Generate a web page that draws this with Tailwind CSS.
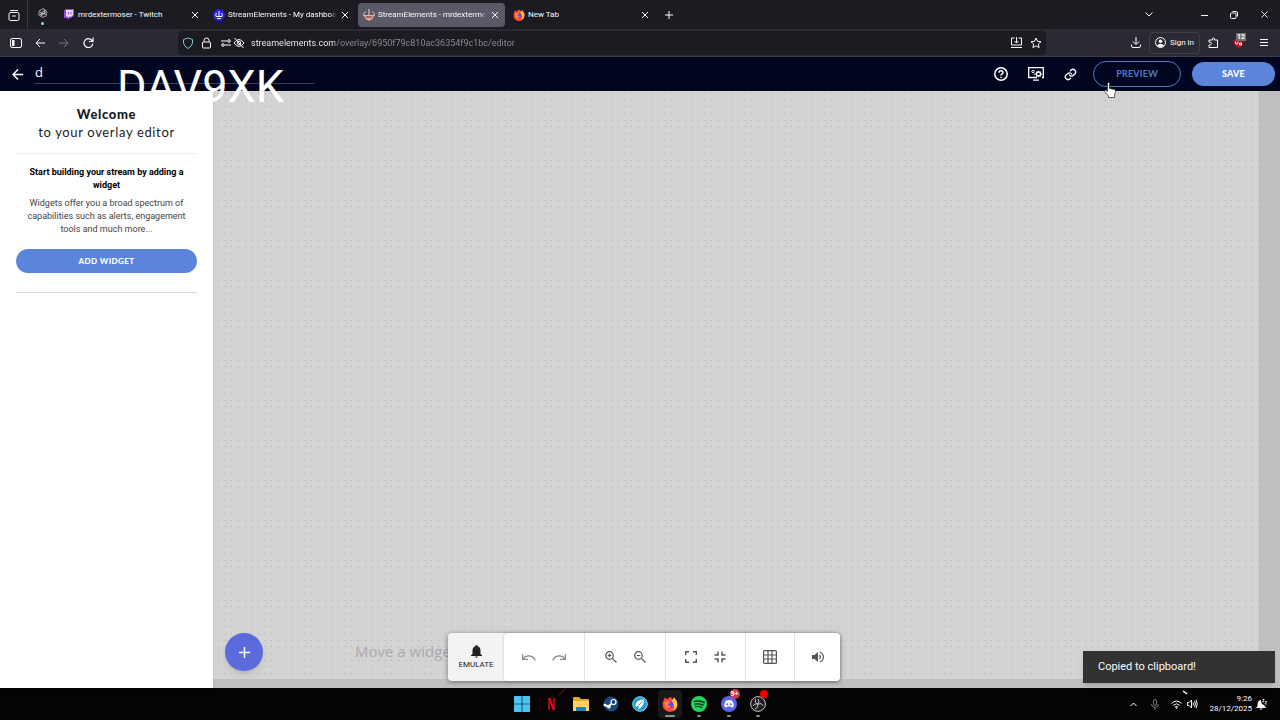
<!DOCTYPE html>
<html lang="en">
<head>
  <meta charset="UTF-8" />
  <meta name="viewport" content="width=device-width, initial-scale=1.0" />
  <title>StreamElements - Overlay editor</title>
  <script src="https://cdn.jsdelivr.net/npm/@tailwindcss/browser@4"></script>
</head>
<body class="h-screen flex flex-col overflow-hidden bg-[#bfbfbf] font-['Open_Sans',sans-serif] text-[10px] text-[#fbfbfe]">

  <!-- browser tabs -->
  <div class="h-[29px] shrink-0 flex items-center bg-[#1c1b22] font-[Roboto,sans-serif]">
    <button class="w-7 h-full flex items-center justify-center border-r border-[#3a3944]" aria-label="Firefox View">
      <svg class="size-3" viewBox="0 0 12 12" fill="none" stroke="currentColor" stroke-linecap="round"><path d="M2.500 1.500h7" /><rect x="1" y="3.500" width="10" height="8" rx="1.500" /><path d="M4.500 7h3" /></svg>
    </button>
    <button class="w-[29px] h-full flex flex-col items-center justify-center pt-1 gap-1" aria-label="Pinned tab">
      <svg class="size-[10px]" viewBox="0 0 24 24" fill="none" stroke="#c9c9cf" stroke-width="2"><path d="M12 2a5 5 0 0 1 5 3.500 5 5 0 0 1 3 8 5 5 0 0 1-5 7 5 5 0 0 1-8-1 5 5 0 0 1-4-8 5 5 0 0 1 4-7 5 5 0 0 1 5-2.500z" /><path d="M8 20v-9l8-5M16 4v9l-8 5M4 9l8 5 8-5M5 16l7-4 7 4" /></svg>
      <span class="size-[3px] rounded-full bg-[#7fe3d4]"></span>
    </button>
    <div class="flex items-center gap-[3px]">
      <div class="w-[148px] h-6 pl-[6px] pr-1 flex items-center gap-[3px]">
        <svg class="size-3 shrink-0" viewBox="0 0 12 12"><path d="M2.500 0H11v6.500L8 9H6.500L4.500 11V9H1V2z" fill="#9146ff" /><path d="M3 1h7v5L8.500 7.500H6.500L5 9V7.500H3z" fill="#eadcff" /><path d="M5.500 3v2.500M8 3v2.500" stroke="#9146ff" /></svg>
        <span class="flex-1 overflow-hidden whitespace-nowrap text-[8px] leading-3">mrdextermoser - Twitch</span>
        <button class="w-3 flex justify-center" aria-label="Close tab"><svg class="size-[6px]" viewBox="0 0 6 6" stroke="currentColor"><path d="M0 0l6 6M6 0L0 6" /></svg></button>
      </div>
      <div class="w-[147px] h-6 pl-[5px] pr-1 flex items-center gap-[3px]">
        <svg class="size-3 shrink-0" viewBox="0 0 12 12" fill="none" stroke="#fff"><circle cx="6" cy="6" r="6" fill="#2c1fe0" stroke="none" /><path d="M6 2v5M3.500 4A3.500 3.500 0 0 0 3 7.500h6A3.500 3.500 0 0 0 8.500 4M4 9.500h4" /></svg>
        <span class="flex-1 overflow-hidden whitespace-nowrap text-[8px] leading-3 mask-r-from-95%">StreamElements - My dashboard</span>
        <button class="w-3 flex justify-center" aria-label="Close tab"><svg class="size-[6px]" viewBox="0 0 6 6" stroke="currentColor"><path d="M0 0l6 6M6 0L0 6" /></svg></button>
      </div>
      <div class="w-[147px] h-6 pl-[5px] pr-1 flex items-center gap-[3px] rounded bg-[#5a5966]">
        <svg class="size-3 shrink-0" viewBox="0 0 12 12" fill="none"><path d="M3 2.500Q0 4 .5 6.500h11Q12 4 9 2.500" stroke="#d8c2c8" /><path d="M6 0v6" stroke="#e8dada" /><path d="M1 6.500h10L9.500 10l-3.500 2-3.500-2z" fill="#e9a08c" /><path d="M3 8h6" stroke="#4b3545" /></svg>
        <span class="flex-1 overflow-hidden whitespace-nowrap text-[8px] leading-3 mask-r-from-95%">StreamElements - mrdextermoser</span>
        <button class="w-3 flex justify-center" aria-label="Close tab"><svg class="size-[6px]" viewBox="0 0 6 6" stroke="currentColor"><path d="M0 0l6 6M6 0L0 6" /></svg></button>
      </div>
      <div class="w-[147px] h-6 pl-[5px] pr-1 flex items-center gap-[3px]">
        <svg class="size-3 shrink-0" viewBox="0 0 24 24"><path d="M2 8q1-4 3-6 1 3 3 3 2-3 5-4 1 3 4 4l1-3q5 5 5 11a11 11 0 0 1-22 0q0-3 1-5z" fill="#ff4a3d" /><path d="M18 2q5 5 5 11-1 7-6 9 4-7-3-14 2-1 4-6z" fill="#ffc62b" /><circle cx="12" cy="13" r="5" fill="#7a3be0" /><path d="M4 9q5-3 9 1-4 0-4 3 1 3 5 2-3 5-8 2-3-3-2-8z" fill="#ff8a2a" /></svg>
        <span class="flex-1 overflow-hidden whitespace-nowrap text-[8px] leading-3">New Tab</span>
        <button class="w-3 flex justify-center" aria-label="Close tab"><svg class="size-[6px]" viewBox="0 0 6 6" stroke="currentColor"><path d="M0 0l6 6M6 0L0 6" /></svg></button>
      </div>
    </div>
    <button class="w-7 flex justify-center" aria-label="New tab"><svg class="size-2" viewBox="0 0 8 8" stroke="currentColor"><path d="M4 0v8M0 4h8" /></svg></button>
    <div class="ml-auto flex items-center">
      <button class="mr-9" aria-label="List all tabs"><svg class="w-2 h-[5px]" viewBox="0 0 8 5" fill="none" stroke="currentColor"><path d="M.5.5L4 4 7.500.5" /></svg></button>
      <button class="w-[30px] flex justify-center" aria-label="Minimize"><svg class="w-[7px] h-2" viewBox="0 0 7 8" stroke="currentColor"><path d="M0 4.500h7" /></svg></button>
      <button class="w-[30px] flex justify-center" aria-label="Restore"><svg class="size-2" viewBox="0 0 8 8" fill="none" stroke="currentColor"><rect x=".5" y="2" width="5.500" height="5.500" rx="1" /><path d="M2.500.5H6A1.500 1.500 0 0 1 7.500 2v3.500" /></svg></button>
      <button class="w-[31px] flex justify-center" aria-label="Close"><svg class="size-[7px]" viewBox="0 0 8 8" stroke="currentColor"><path d="M.5.5l7 7M7.500.5l-7 7" /></svg></button>
    </div>
  </div>

  <!-- browser toolbar -->
  <div class="h-7 shrink-0 flex items-center bg-[#2b2a33] border-b border-[#3d3c49] font-[Roboto,sans-serif]">
    <div class="w-[178px] pl-1 flex items-center shrink-0">
      <button class="w-6 flex justify-center" aria-label="Sidebar"><svg class="w-3 h-[10px]" viewBox="0 0 12 10"><rect x=".5" y=".5" width="11" height="9" rx="1.500" fill="none" stroke="currentColor" /><path d="M2 2h2.500v6H2z" fill="currentColor" /></svg></button>
      <button class="w-6 flex justify-center" aria-label="Back"><svg class="size-[10px]" viewBox="0 0 10 10" fill="none" stroke="currentColor"><path d="M10 5H1M5 1L1 5l4 4" /></svg></button>
      <button class="w-6 flex justify-center text-[#77767f]" aria-label="Forward"><svg class="size-[10px]" viewBox="0 0 10 10" fill="none" stroke="currentColor"><path d="M0 5h9M5 1l4 4-4 4" /></svg></button>
      <button class="w-6 flex justify-center" aria-label="Reload"><svg class="size-[11px]" viewBox="0 0 11 11" fill="none" stroke="currentColor" stroke-width="1.200"><path d="M9.500 4.500A4.400 4.400 0 1 0 9.800 6.500M10 .5v4H6" /></svg></button>
    </div>
    <div class="flex-1 max-w-[868px] h-6 px-1 flex items-center rounded bg-[#1c1b22]">
      <svg class="size-3 shrink-0" viewBox="0 0 12 12" fill="none" stroke="#74c5cf"><path d="M6 1l4.500 1.500V6Q10 9.500 6 11.500 2 9.500 1.500 6V2.500z" /></svg>
      <svg class="w-[9px] h-3 ml-2 shrink-0" viewBox="0 0 9 12" fill="none" stroke="currentColor"><rect x=".5" y="5" width="8" height="6" rx="1" /><path d="M2 5V3.500a2.500 2.500 0 0 1 5 0V5" /></svg>
      <svg class="w-[10px] h-2 ml-[10px] shrink-0" viewBox="0 0 10 8" fill="none" stroke="currentColor"><path d="M0 2h6M4 6h6" /><circle cx="8" cy="2" r="1.300" /><circle cx="2" cy="6" r="1.300" /></svg>
      <svg class="size-3 ml-[2px] shrink-0" viewBox="0 0 12 12" fill="none" stroke="currentColor"><path d="M1 6q5-7 10 0-5 7-10 0zM1.500 1l9 10" /><circle cx="6" cy="6" r="1.800" /></svg>
      <input type="text" aria-label="Address" value="streamelements.com/overlay/6950f79c810ac36354f9c1bc/editor"
        class="flex-1 ml-[6px] h-5 text-[9px] outline-none text-transparent bg-clip-text bg-[linear-gradient(90deg,#fbfbfe_84px,#8f8e98_84px)]" />
      <button class="mr-2" aria-label="Install"><svg class="w-[11px] h-[11px]" viewBox="0 0 11 11" fill="none" stroke="currentColor"><path d="M3.500 1h-3v7h10V1h-3M0 10.500h11M5.500 0v6M3.500 4l2 2 2-2" /></svg></button>
      <button aria-label="Bookmark"><svg class="size-3" viewBox="0 0 12 12" fill="none" stroke="currentColor" stroke-linejoin="round"><path d="M6 1l1.500 3.300 3.500.4-2.600 2.400.7 3.500L6 8.900l-3.100 1.700.7-3.500L1 4.700l3.500-.4z" /></svg></button>
    </div>
    <div class="ml-auto pr-3 flex items-center">
      <button class="mr-2" aria-label="Downloads"><svg class="w-[10px] h-[11px]" viewBox="0 0 10 11" fill="none" stroke="currentColor"><path d="M5 0v7M2 4.500l3 3 3-3M.5 7.500V9q0 1.500 1.500 1.500h6Q9.500 10.500 9.500 9V7.500" /></svg></button>
      <button class="w-[51px] h-[22px] flex items-center justify-center gap-1 border border-[#3f3e4a] rounded text-[8px]">
        <svg class="size-[11px]" viewBox="0 0 11 11"><circle cx="5.500" cy="5.500" r="5" fill="none" stroke="currentColor" /><circle cx="5.500" cy="4.200" r="1.800" fill="currentColor" /><path d="M2 8.500q3.500-3.500 7 0-3.500 3-7 0z" fill="currentColor" /></svg>Sign in</button>
      <button class="ml-2" aria-label="Extensions"><svg class="size-[11px]" viewBox="0 0 11 11" fill="none" stroke="currentColor"><path d="M1 10.500V8q2.500 0 2.500-1.500T1 5V3h3.500V2Q5.500-.5 6.500 2v1H9.500v7.500z" /></svg></button>
      <button class="relative ml-[14px] size-[13px]" aria-label="uBlock Origin">
        <svg class="size-[11px] mt-px" viewBox="0 0 11 11"><path d="M5.500 0Q8 1.500 11 1.500 11 8.500 5.500 11 0 8.500 0 1.500 3 1.500 5.500 0z" fill="#a6101f" /><path d="M2.500 3.500v2q1.500 1.500 2.500 0v-2M6.500 5h2v2h-2z" stroke="#fff" fill="none" /></svg>
        <span class="absolute -top-[3px] left-[3px] px-px h-2 bg-[#737373] text-[7px] leading-[8px] font-bold">12</span>
      </button>
      <button class="ml-[14px]" aria-label="Menu"><svg class="w-2 h-[7px]" viewBox="0 0 8 7" stroke="currentColor"><path d="M0 .5h8M0 3.500h8M0 6.500h8" /></svg></button>
    </div>
  </div>

  <!-- editor header -->
  <header class="h-[34px] shrink-0 flex items-center pl-3 pr-[5px] bg-[#000620]">
    <a href="#" aria-label="Back to overlays"><svg class="size-[11px]" viewBox="0 0 11 11" fill="none" stroke="#fff" stroke-width="1.500"><path d="M11 5.500H1M6 .5l-5 5 5 5" /></svg></a>
    <input type="text" value="d" aria-label="Overlay name" class="w-[280px] h-5 ml-[11px] pl-px pb-1 border-b border-[#3a4058] text-[13px] text-white outline-none" />
    <div class="ml-auto flex items-center">
      <button aria-label="Help"><svg class="size-[14px]" viewBox="0 0 14 14" fill="none" stroke="#fff" stroke-width="1.500"><circle cx="7" cy="7" r="6.200" /><path d="M5 5.700q0-2 2-2t2 1.800q0 1-1.200 1.700Q7 7.700 7 8.600M7 9.700v1.400" /></svg></button>
      <button class="ml-5" aria-label="Overlay settings"><svg class="w-4 h-[14px]" viewBox="0 0 16 14" fill="none" stroke="#fff" stroke-width="1.300"><path d="M9 10.500H.7V.7h14.600v9.800H14M5 13.200h6" /><circle cx="5" cy="4.500" r="1.200" stroke-width="1" /><path d="M6.200 6.500v1.500" stroke-width="1" /><circle cx="10.500" cy="7" r="2" /><path d="M10.500 3.800v1M10.500 9.200v1M7.300 7h1M12.700 7h1M8.200 4.700l.8.800M12 8.500l.8.800M12.800 4.700l-.8.800M9 8.500l-.8.800" /></svg></button>
      <button class="ml-5" aria-label="Copy link"><svg class="size-[13px]" viewBox="0 0 24 24" fill="none" stroke="#fff" stroke-width="2.500" stroke-linecap="round"><path d="M10 13a5 5 0 0 0 7.500.5l3-3a5 5 0 0 0-7-7l-1.700 1.700" /><path d="M14 11a5 5 0 0 0-7.500-.5l-3 3a5 5 0 0 0 7 7l1.700-1.700" /></svg></button>
      <button class="w-[88px] h-[26px] ml-4 rounded-full border border-[#5279c4] font-[Lato,sans-serif] font-bold text-[9px] tracking-wide text-[#5478c8]">PREVIEW</button>
      <button class="w-[83px] h-6 ml-[11px] rounded-full bg-[#5b85db] font-[Lato,sans-serif] font-black text-[9px] tracking-wide text-white">SAVE</button>
    </div>
  </header>

  <main class="flex-1 min-h-0 flex">
    <!-- sidebar -->
    <aside class="relative z-10 w-[213px] shrink-0 px-4 bg-white shadow-sm text-center text-[#1b1b1b] font-[Lato,sans-serif]">
      <div class="pt-[14px] pb-3 border-b border-[#ececec]">
        <h1 class="text-[13px] leading-[18px] font-black tracking-wider">Welcome</h1>
        <p class="text-[13px] leading-[18px] tracking-wider">to your overlay editor</p>
      </div>
      <div class="pt-3 pb-[19px] border-b border-[#d8d8d8] font-[Roboto,sans-serif]">
        <h2 class="px-2 text-[9px] leading-[13px] font-bold text-black">Start building your stream by adding a widget</h2>
        <p class="mt-[5px] px-2 text-[9px] leading-[13px] text-[#444]">Widgets offer you a broad spectrum of capabilities such as alerts, engagement tools and much more...</p>
        <button class="w-full h-6 mt-[13px] rounded-full bg-[#5b85db] font-[Lato,sans-serif] text-[8px] font-black tracking-wider text-white">ADD WIDGET</button>
      </div>
    </aside>

    <!-- overlay canvas -->
    <section class="relative flex-1 pr-[21px] pb-[9px] bg-[#bfbfbf]">
      <svg class="block size-full bg-[#d3d3d3]">
        <defs>
          <pattern id="dots" width="20" height="20" patternUnits="userSpaceOnUse">
            <path d="M5 2h1M12 2h1M18 2h1M5 9h1M12 9h1M18 9h1M5 15h1M12 15h1M18 15h1" transform="translate(0 .5)" stroke="#b0b0b4" />
          </pattern>
        </defs>
        <rect width="100%" height="100%" fill="url(#dots)" />
      </svg>
      <p class="absolute left-[142px] bottom-6 text-[15px] leading-[26px] text-[#ababab]">Move a widget</p>
      <button class="absolute left-3 bottom-[17px] size-[38px] rounded-full bg-[#5b6bdc] shadow-md flex items-center justify-center" aria-label="Add">
        <svg class="size-[11px]" viewBox="0 0 11 11" stroke="#fff" stroke-width="1.500"><path d="M5.500 0v11M0 5.500h11" /></svg>
      </button>
    </section>
  </main>

  <!-- editor tools -->
  <div class="absolute z-20 left-[448px] bottom-[39px] h-12 flex rounded bg-[#f3f3f3] shadow-[0_1px_5px_rgba(0,0,0,0.45)] text-[#555]">
    <button class="w-14 flex flex-col items-center justify-center gap-[2px] font-[Roboto,sans-serif] text-[8px] leading-[9px] text-[#222]">
      <svg class="w-[11px] h-[13px]" viewBox="0 0 11 13" fill="#222"><path d="M5.500 0q1 0 1 1.200Q9.500 2 9.500 5.500v3.500l1.500 1.200v.8H0v-.8L1.500 9V5.500Q1.500 2 4.500 1.200 4.500 0 5.500 0zM4 11.500h3q-1.500 2.500-3 0z" /></svg>EMULATE</button>
    <div class="flex rounded bg-white divide-x divide-[#e3e3e3] shadow-[0_0_3px_rgba(0,0,0,0.2)]">
      <div class="w-[81px] flex items-center justify-center gap-4">
        <button aria-label="Undo"><svg class="w-[14px] h-[7px]" viewBox="0 0 14 7" fill="none" stroke="#8b8b8b" stroke-width="1.300"><path d="M.7 0v5.300H6M1 5q3-4 7-3 4 .8 5.300 4.500" /></svg></button>
        <button aria-label="Redo"><svg class="w-[14px] h-[7px]" viewBox="0 0 14 7" fill="none" stroke="#8b8b8b" stroke-width="1.300"><path d="M13.300 0v5.300H8M13 5q-3-4-7-3Q2 2.800.7 6.500" /></svg></button>
      </div>
      <div class="w-[81px] flex items-center justify-center gap-[17px]">
        <button aria-label="Zoom in"><svg class="size-3" viewBox="0 0 12 12" fill="none" stroke="currentColor" stroke-width="1.200"><circle cx="4.500" cy="4.500" r="3.800" /><path d="M7.300 7.300l4.200 4.200M4.500 2.700v3.600M2.700 4.500h3.600" /></svg></button>
        <button aria-label="Zoom out"><svg class="size-3" viewBox="0 0 12 12" fill="none" stroke="currentColor" stroke-width="1.200"><circle cx="4.500" cy="4.500" r="3.800" /><path d="M7.300 7.300l4.200 4.200M2.700 4.500h3.600" /></svg></button>
      </div>
      <div class="w-20 flex items-center justify-center gap-[17px]">
        <button aria-label="Fullscreen"><svg class="size-3" viewBox="0 0 12 12" fill="none" stroke="currentColor" stroke-width="1.400"><path d="M.7 4V.7H4M8 .7h3.300V4M11.300 8v3.300H8M4 11.300H.7V8" /></svg></button>
        <button aria-label="Fit"><svg class="size-3" viewBox="0 0 12 12" fill="none" stroke="currentColor" stroke-width="1.400"><path d="M4 .5V4H.5M8 .5V4h3.500M11.500 8H8v3.500M.5 8H4v3.500" /></svg></button>
      </div>
      <button class="w-[49px] flex items-center justify-center" aria-label="Grid"><svg class="size-[14px]" viewBox="0 0 14 14" fill="none" stroke="currentColor" stroke-width="1.200"><rect x=".6" y=".6" width="12.800" height="12.800" rx="1" /><path d="M5 0v14M9 0v14M0 5h14M0 9h14" /></svg></button>
      <button class="w-[45px] flex items-center justify-center" aria-label="Volume"><svg class="size-3" viewBox="0 0 12 12" fill="none" stroke="currentColor" stroke-width="1.200"><path d="M0 4h2.500L6 1v10L2.500 8H0z" fill="currentColor" stroke="none" /><path d="M7.500 4q1.800 2 0 4M7.800 1Q11.400 2.500 11.400 6T7.800 11" /></svg></button>
    </div>
  </div>

  <div role="status" class="absolute z-20 right-[5px] bottom-[37px] w-48 h-8 px-[15px] flex items-center bg-[#323232] shadow-md font-[Roboto,sans-serif] text-[11px]">Copied to clipboard!</div>

  <!-- taskbar -->
  <footer class="h-8 shrink-0 relative flex items-center justify-center bg-[#050304]">
    <div class="w-[260px] h-full flex items-center justify-between">
      <button class="w-6 flex justify-center" aria-label="Start"><svg class="size-4" viewBox="0 0 16 16" fill="#4cc2f5"><path d="M0 0h7.700v7.700H0zM8.300 0H16v7.700H8.300zM0 8.300h7.700V16H0zM8.300 8.300H16V16H8.300z" /></svg></button>
      <button class="w-6 flex justify-center" aria-label="Netflix"><svg class="w-[7px] h-3" viewBox="0 0 7 12"><path d="M0 0h2v12H0zM5 0h2v12H5z" fill="#a80712" /><path d="M0 0h2.200L7 12H4.800z" fill="#e50914" /></svg></button>
      <button class="w-6 flex justify-center" aria-label="File Explorer"><svg class="w-4 h-[14px]" viewBox="0 0 16 14"><path d="M0 1q0-1 1-1h5l2 2h7q1 0 1 1v10q0 1-1 1H1q-1 0-1-1z" fill="#e9a825" /><path d="M0 4h16v9q0 1-1 1H1q-1 0-1-1z" fill="#ffd35c" /><path d="M3 14v-3q0-1 1-1h8q1 0 1 1v3z" fill="#1f7fbd" /></svg></button>
      <button class="w-6 flex justify-center" aria-label="Steam"><svg class="size-4" viewBox="0 0 16 16"><circle cx="8" cy="8" r="7.500" fill="#174a7c" /><path d="M.7 8.500l4.500 2 3-2.500" stroke="#fff" stroke-width="2" fill="none" /><circle cx="10.500" cy="6" r="2.500" fill="#174a7c" stroke="#fff" stroke-width="1.200" /><circle cx="6" cy="10.800" r="1.800" fill="#fff" /></svg></button>
      <button class="w-6 flex justify-center" aria-label="Launcher"><svg class="size-4" viewBox="0 0 16 16"><circle cx="8" cy="8" r="7.300" fill="#1d9fd3" stroke="#8fdcf3" /><path d="M3.500 8.500Q4.500 3.500 12 3.200q.3 7-5.500 10V9.500L3.800 11z" fill="#fff" /><path d="M6.500 9.500L10 5.500" stroke="#1d9fd3" /></svg></button>
      <button class="relative w-6 h-7 rounded flex items-center justify-center bg-[#1b181a]" aria-label="Firefox">
        <svg class="size-4" viewBox="0 0 24 24"><path d="M2 8q1-4 3-6 1 3 3 3 2-3 5-4 1 3 4 4l1-3q5 5 5 11a11 11 0 0 1-22 0q0-3 1-5z" fill="#ff4a3d" /><path d="M18 2q5 5 5 11-1 7-6 9 4-7-3-14 2-1 4-6z" fill="#ffc62b" /><circle cx="12" cy="13" r="5" fill="#7a3be0" /><path d="M4 9q5-3 9 1-4 0-4 3 1 3 5 2-3 5-8 2-3-3-2-8z" fill="#ff8a2a" /></svg>
        <span class="absolute bottom-px w-[10px] h-[2px] rounded-full bg-[#8f8d90]"></span>
      </button>
      <button class="relative w-6 h-7 flex items-center justify-center" aria-label="Spotify">
        <svg class="size-4" viewBox="0 0 16 16" fill="none" stroke="#06240f" stroke-linecap="round"><circle cx="8" cy="8" r="8" fill="#1ed760" stroke="none" /><path d="M3.500 5.500q5-1.500 9.500 1" stroke-width="1.600" /><path d="M4 8.200q4-1 8 1" stroke-width="1.300" /><path d="M4.500 10.800q3.500-.8 6.500.8" stroke-width="1.100" /></svg>
        <span class="absolute bottom-px w-1 h-[2px] rounded-full bg-[#8f8d90]"></span>
      </button>
      <button class="relative w-6 h-7 flex items-center justify-center" aria-label="Discord">
        <svg class="size-4" viewBox="0 0 16 16"><circle cx="8" cy="8" r="8" fill="#5865f2" /><path d="M5 4.500q3-1 6 0 2 3 1.800 6-1.200 1-2.300 1l-.6-1H6.100l-.6 1q-1.100 0-2.300-1Q3 7.500 5 4.500z" fill="#fff" /><circle cx="6.300" cy="8.200" r="1" fill="#5865f2" /><circle cx="9.700" cy="8.200" r="1" fill="#5865f2" /></svg>
        <span class="absolute -top-px right-px size-[10px] rounded-full bg-[#c93a4a] text-[7px] leading-[10px] font-bold">9+</span>
        <span class="absolute bottom-px w-1 h-[2px] rounded-full bg-[#8f8d90]"></span>
      </button>
      <button class="relative w-6 h-7 flex items-center justify-center" aria-label="OBS Studio">
        <svg class="size-4" viewBox="0 0 16 16" fill="none" stroke="#c4c4c4"><circle cx="8" cy="8" r="7.400" fill="#1f1d20" /><path d="M5.500 3Q4.500 7 8 8q3.500-1.500 5 1.500M8 8q.5 4-3 5M8 8Q4 7 3 10M8 8q2-3 0-5" /></svg>
        <span class="absolute top-0 right-[2px] size-2 rounded-full bg-[#f00000]"></span>
        <span class="absolute bottom-px w-1 h-[2px] rounded-full bg-[#8f8d90]"></span>
      </button>
    </div>
    <div class="absolute right-[13px] inset-y-0 flex items-center">
      <button class="mr-[14px]" aria-label="Hidden icons"><svg class="w-[7px] h-1" viewBox="0 0 7 4" fill="none" stroke="currentColor"><path d="M.5 4l3-3 3 3" /></svg></button>
      <svg class="w-2 h-[11px] mr-3" viewBox="0 0 8 11" fill="none" stroke="#77757a"><rect x="2.500" y=".5" width="3" height="6" rx="1.500" /><path d="M.5 5q0 3.500 3.500 3.500T7.500 5M4 8.500V11" /></svg>
      <svg class="w-[11px] h-[9px] mr-[5px]" viewBox="0 0 11 9" fill="none" stroke="currentColor"><path d="M.5 3.500q5-5 10 0M2.300 5.300q3.200-3 6.400 0M4 7q1.500-1.300 3 0" /><circle cx="5.500" cy="8" r=".6" /></svg>
      <svg class="w-[11px] h-[10px] mr-[11px]" viewBox="0 0 11 10" fill="none" stroke="currentColor"><path d="M.5 3.500h1.500L4.500 1v8L2 6.500H.5zM6 3.500q1 1.500 0 3M7.500 2q2 3 0 6M9 .8q2.500 4.200 0 8.400" /></svg>
      <div class="mr-1 text-right font-[Roboto,sans-serif] text-[8px] leading-[10px]">9:26<br />28/12/2025</div>
      <svg class="w-[11px] h-[11px]" viewBox="0 0 11 11" fill="currentColor"><path d="M5 1Q1.500 1.500 1.500 5v2L0 9h10L8.500 7V6Q5 6 5 1zM3.500 9.500h3q-1.500 2.500-3 0z" /><path d="M6.500.5h1.800L6.500 3h1.800M9 2.500h1.700L9 5h1.700" fill="none" stroke="currentColor" stroke-width=".8" /></svg>
    </div>
    <!-- bits of the wallpaper showing through -->
    <svg class="absolute left-[558px] top-0 w-2 h-2" viewBox="0 0 8 8" stroke="#8a1020"><path d="M1 7l6-6" /></svg>
    <svg class="absolute right-[92px] top-[2px] w-[6px] h-[5px]" viewBox="0 0 6 5" stroke="#fff" stroke-width="1.500"><path d="M1 1l4 3" /></svg>
  </footer>

  <!-- stream code overlay -->
  <div class="absolute z-30 left-[117px] top-[61px] font-[Roboto,sans-serif] text-[45px] leading-[52px] text-white">DAV9XK</div>

  <!-- hand pointer -->
  <svg class="absolute z-30 left-[1104px] top-[82px] w-3 h-4" viewBox="0 0 12 16"><path d="M3.500 1.500q0-1 1-1t1 1v5l5 1q1.500.5 1 2L10.500 13v2.500h-6V14L.7 9.500q-.5-1.500 1-1.500l1.800 1.500z" fill="#fff" stroke="#222" stroke-width=".7" /></svg>
</body>
</html>
